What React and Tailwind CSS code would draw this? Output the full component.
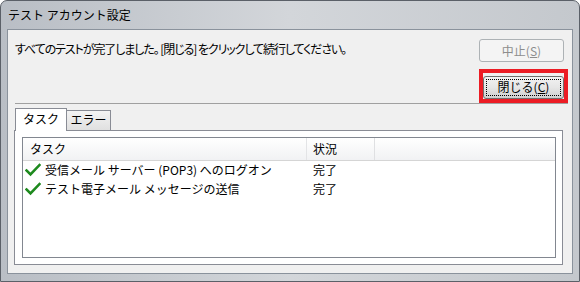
import React from 'react'

const font = { fontFamily: '"Noto Sans CJK JP", "Noto Sans", sans-serif' }

const Check = () => (
  <svg width="16" height="14" viewBox="0 0 16 14" className="shrink-0">
    <path d="M1.5 7.5 L5.5 11.5 L14.5 2" fill="none" stroke="#1e8a1e" strokeWidth="2.6" strokeLinecap="square" />
  </svg>
)

const rows = [
  { task: '受信メール サーバー (POP3) へのログオン', status: '完了' },
  { task: 'テスト電子メール メッセージの送信', status: '完了' },
]

export default function App() {
  return (
    <div
      className="w-[580px] h-[282px] flex flex-col rounded-t-[7px] border border-[#5b6068] bg-gradient-to-r from-[#b9bec5] via-[#d3d6da] to-[#c4c8cd] text-black overflow-hidden"
      style={font}
    >
      {/* title bar */}
      <div className="h-[28px] flex items-center pl-[7px] text-[12px] text-black shrink-0">
        テスト アカウント設定
      </div>

      {/* client area */}
      <div className="mx-[6px] mb-[7px] flex-1 flex flex-col border border-[#8a929c] bg-[#f0f0f0]">
        <div className="flex justify-between pt-[9px] pl-[7px] pr-[8px]">
          <div className="mt-[2px] text-[12px] leading-[16px] tracking-[-0.09em]" style={{ fontFeatureSettings: '"palt"' }}>
            すべてのテストが完了しました。 [閉じる] をクリックして続行してください。
          </div>
          <div className="flex flex-col">
            <button className="w-[85px] h-[23px] rounded-[3px] border border-[#adb2b5] bg-[#f4f4f4] text-[12px] text-[#8d8d8d]">
              中止(<span className="underline">S</span>)
            </button>
            <div className="relative mt-[11px] self-end">
              <button className="w-[81px] h-[23px] rounded-[3px] border border-[#707070] bg-gradient-to-b from-[#f2f2f2] via-[#e6e6e6] to-[#cfcfcf] text-[12px] p-[2px]">
                <span className="flex h-full w-full items-center justify-center border border-dotted border-black">
                  閉じる(<span className="underline">C</span>)
                </span>
              </button>
              <span className="absolute -left-[4px] -right-[4px] -top-[4px] -bottom-[4px] border-[4px] border-[#ec1c24]" />
            </div>
          </div>
        </div>

        <div className="mt-[4px] ml-[7px] mr-[4px] h-[1px] bg-[#a0a0a0]" />

        {/* tab control */}
        <div className="mt-[4px] ml-[6px] mr-[9px] mb-[8px] flex-1 flex flex-col">
          <div className="flex items-end pl-[1px] text-[12px] leading-none">
            <div className="relative z-10 -mb-[1px] h-[23px] w-[52px] flex items-center justify-center border border-b-0 border-[#898c95] bg-white pb-[1px]">
              タスク
            </div>
            <div className="h-[20px] w-[45px] -ml-[1px] flex items-center justify-center border border-b-0 border-[#898c95] bg-gradient-to-b from-[#f3f3f3] to-[#e0e0e0]">
              エラー
            </div>
          </div>
          <div className="flex-1 flex flex-col border border-[#898c95] bg-white p-[6px] pl-[7px]">
            <div className="flex-1 border border-[#828790] bg-white text-[12px]">
              <div className="h-[23px] flex items-stretch bg-gradient-to-b from-white to-[#f1f2f4] border-b border-[#d5d5d5]">
                <div className="w-[283px] flex items-center pl-[7px]">タスク</div>
                <div className="w-[1px] bg-[#e3e4e6]" />
                <div className="w-[67px] flex items-center pl-[6px]">状況</div>
                <div className="w-[1px] bg-[#dfe0e2]" />
                <div className="flex-1" />
              </div>
              <div>
                {rows.map((r) => (
                  <div key={r.task} className="h-[19px] flex items-center">
                    <div className="w-[284px] flex items-center gap-[4px] pl-[2px]">
                      <Check />
                      <span>{r.task}</span>
                    </div>
                    <div className="pl-[6px]">{r.status}</div>
                  </div>
                ))}
              </div>
            </div>
          </div>
        </div>
      </div>
    </div>
  )
}
